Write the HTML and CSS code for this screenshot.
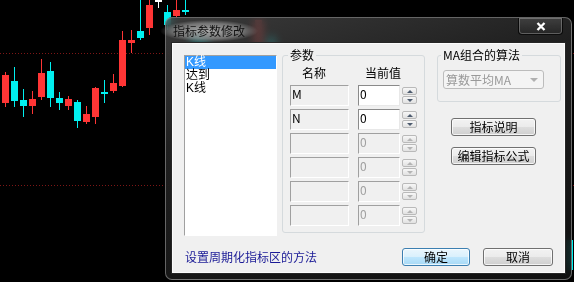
FILE: index.html
```html
<!DOCTYPE html>
<html lang="zh-CN">
<head>
  <meta charset="UTF-8">
  <title>指标参数修改</title>
  <link rel="stylesheet" href="styles.css">
</head>
<body>
  <!-- K线图背景 -->
  <svg class="chart" width="574" height="282" viewBox="0 0 574 282">
    <line class="grid" x1="0" y1="53.5" x2="574" y2="53.5"/>
    <line class="grid" x1="0" y1="185.5" x2="574" y2="185.5"/>
    <g class="up">
      <line x1="5.5" y1="72" x2="5.5" y2="107"/><rect x="2" y="75" width="7" height="28"/>
      <line x1="32.5" y1="91" x2="32.5" y2="114"/><rect x="29" y="99" width="7" height="7"/>
      <line x1="41.5" y1="59" x2="41.5" y2="100"/><rect x="38" y="73" width="7" height="24"/>
      <line x1="68.5" y1="96" x2="68.5" y2="110"/><rect x="65" y="99" width="7" height="7"/>
      <line x1="86.5" y1="106" x2="86.5" y2="124"/><rect x="83" y="114" width="7" height="8"/>
      <line x1="95.5" y1="87" x2="95.5" y2="124"/><rect x="92" y="88" width="7" height="29"/>
      <line x1="113.5" y1="74" x2="113.5" y2="93"/><rect x="110" y="83" width="7" height="8"/>
      <line x1="122.5" y1="31" x2="122.5" y2="87"/><rect x="119" y="40" width="7" height="46"/>
      <line x1="131.5" y1="30" x2="131.5" y2="53"/><rect x="128" y="40" width="7" height="3"/>
      <line x1="149.5" y1="0" x2="149.5" y2="35"/><rect x="146" y="5" width="7" height="23"/>
      <line x1="176.5" y1="0" x2="176.5" y2="18"/><rect x="173" y="10" width="7" height="6"/>
      <rect x="255" y="20" width="7" height="40"/>
    </g>
    <g class="down">
      <line x1="14.5" y1="67" x2="14.5" y2="107"/><rect x="11" y="81" width="7" height="20"/>
      <line x1="23.5" y1="89" x2="23.5" y2="117"/><rect x="20" y="100" width="7" height="6"/>
      <line x1="50.5" y1="62" x2="50.5" y2="107"/><rect x="47" y="71" width="7" height="27"/>
      <line x1="59.5" y1="92" x2="59.5" y2="110"/><rect x="56" y="98" width="7" height="5"/>
      <line x1="77.5" y1="100" x2="77.5" y2="128"/><rect x="74" y="102" width="7" height="19"/>
      <line x1="104.5" y1="80" x2="104.5" y2="103"/><rect x="101" y="92" width="7" height="2"/>
      <line x1="140.5" y1="0" x2="140.5" y2="40"/><rect x="137" y="31" width="7" height="7"/>
      <line x1="167.5" y1="5" x2="167.5" y2="30"/><rect x="164" y="12" width="7" height="13"/>
      <line x1="185.5" y1="0" x2="185.5" y2="15"/><rect x="182" y="10" width="7" height="2"/>
      <rect x="192" y="34" width="7" height="21"/>
      <rect x="201" y="38" width="7" height="14"/>
      <rect x="268" y="37" width="7" height="23"/>
      <rect x="566" y="240" width="7" height="30"/>
    </g>
    <g class="flat">
      <line x1="158.5" y1="0" x2="158.5" y2="8"/><rect x="155" y="0" width="7" height="2"/>
    </g>
  </svg>

  <div class="dialog">
    <div class="titlebar">
      <span class="title">指标参数修改</span>
      <span class="close">
        <svg width="10" height="9" viewBox="0 0 10 9"><path d="M1.5 1 L8.5 8 M8.5 1 L1.5 8"/></svg>
      </span>
    </div>

    <div class="client">
      <div class="main">
        <ul class="list">
          <li class="selected">K线</li>
          <li>达到</li>
          <li>K线</li>
        </ul>

        <fieldset class="params">
          <legend>参数</legend>
          <div class="head">
            <span class="head-name">名称</span>
            <span class="head-value">当前值</span>
          </div>
          <div class="rows">
            <div class="row">
              <div class="field name">M</div>
              <div class="field value">0</div>
              <div class="spin"><span><i class="arrow-up"></i></span><span><i class="arrow-down"></i></span></div>
            </div>
            <div class="row">
              <div class="field name">N</div>
              <div class="field value">0</div>
              <div class="spin"><span><i class="arrow-up"></i></span><span><i class="arrow-down"></i></span></div>
            </div>
            <div class="row off">
              <div class="field name"></div>
              <div class="field value">0</div>
              <div class="spin"><span><i class="arrow-up"></i></span><span><i class="arrow-down"></i></span></div>
            </div>
            <div class="row off">
              <div class="field name"></div>
              <div class="field value">0</div>
              <div class="spin"><span><i class="arrow-up"></i></span><span><i class="arrow-down"></i></span></div>
            </div>
            <div class="row off">
              <div class="field name"></div>
              <div class="field value">0</div>
              <div class="spin"><span><i class="arrow-up"></i></span><span><i class="arrow-down"></i></span></div>
            </div>
            <div class="row off">
              <div class="field name"></div>
              <div class="field value">0</div>
              <div class="spin"><span><i class="arrow-up"></i></span><span><i class="arrow-down"></i></span></div>
            </div>
          </div>
        </fieldset>

        <div class="side">
          <fieldset class="algo">
            <legend>MA组合的算法</legend>
            <div class="combo">算数平均MA<i class="combo-arrow"></i></div>
          </fieldset>
          <button class="btn side-btn">指标说明</button>
          <button class="btn side-btn second">编辑指标公式</button>
        </div>
      </div>

      <div class="footer">
        <span class="link">设置周期化指标区的方法</span>
        <button class="btn default ok">确定</button>
        <button class="btn cancel">取消</button>
      </div>
    </div>
  </div>
</body>
</html>
```

FILE: styles.css
```css
body {
  margin: 0;
  width: 574px;
  height: 282px;
  overflow: hidden;
  position: relative;
  background-color: #000;
  font-family: "Noto Sans CJK SC", "Liberation Sans", sans-serif;
  font-size: 12px;
  color: #000;
}

/* chart */
.chart {
  position: absolute;
  left: 0;
  top: 0;
}
.chart .grid {
  stroke: #7d1616;
  stroke-width: 1;
  stroke-dasharray: 1 2;
}
.up rect { fill: #ff3535; }
.up line { stroke: #ff3535; stroke-width: 1; }
.down rect { fill: #00f0f0; }
.down line { stroke: #00f0f0; stroke-width: 1; }
.flat rect { fill: #ffffff; }
.flat line { stroke: #ffffff; stroke-width: 1; }

/* window */
.dialog {
  position: absolute;
  left: 165px;
  top: 17px;
  width: 407px;
  height: 263px;
  box-sizing: border-box;
  padding: 0 6px 6px 6px;
  border: 1px solid rgba(170, 170, 170, 0.55);
  border-radius: 7px;
  background: linear-gradient(165deg, rgba(80, 80, 80, 0.72) 0%, rgba(38, 38, 38, 0.82) 35%, rgba(18, 18, 18, 0.9) 100%);
  backdrop-filter: blur(5px);
  display: flex;
  flex-direction: column;
}

.titlebar {
  height: 25px;
  display: flex;
  align-items: center;
}

.title {
  margin-left: -12px;
  padding: 5px 13px;
  line-height: 12px;
  color: #111;
  background: radial-gradient(closest-side, rgba(200, 200, 200, 0.8), rgba(190, 190, 190, 0.45) 70%, rgba(190, 190, 190, 0));
}

.close {
  align-self: flex-start;
  margin-left: auto;
  margin-right: 2px;
  width: 45px;
  height: 17px;
  box-sizing: border-box;
  border: 1px solid rgba(0, 0, 0, 0.8);
  border-top: none;
  border-radius: 0 0 4px 4px;
  box-shadow: inset 0 0 0 1px rgba(200, 200, 200, 0.35);
  background: linear-gradient(rgba(90, 90, 90, 0.5), rgba(40, 40, 40, 0.6));
  display: flex;
  align-items: center;
  justify-content: center;
}
.close path {
  stroke: #fff;
  stroke-width: 2.3;
  fill: none;
}

.client {
  flex: 1;
  background-color: #f0f0f0;
  border: 1px solid #fbfbfb;
  box-shadow: 0 0 0 1px #262626;
  display: flex;
  flex-direction: column;
}

.main {
  height: 192px;
  box-sizing: border-box;
  padding: 5px 0 0 11px;
  display: flex;
  align-items: flex-start;
}

/* list */
.list {
  margin: 6px 0 0 0;
  padding: 0;
  list-style: none;
  width: 93px;
  height: 181px;
  box-sizing: border-box;
  border: 1px solid;
  border-color: #a0a0a0 #ffffff #ffffff #a0a0a0;
  background-color: #fff;
  font-family: "Liberation Sans", "Noto Sans CJK SC", sans-serif;
}
.list li {
  height: 13px;
  line-height: 13px;
  padding-left: 1px;
}
.list li.selected {
  background-color: #3399ff;
  color: #fff;
}

/* group boxes */
fieldset {
  margin: 0;
  padding: 0;
  min-width: 0;
  box-sizing: border-box;
  border: 1px solid #d5dadd;
  border-radius: 3px;
}
legend {
  padding: 0 2px;
  line-height: 12px;
}

.params {
  margin-left: 5px;
  width: 143px;
  height: 184px;
}
.params legend {
  margin-left: 5px;
}

.head {
  display: flex;
  margin-top: 6px;
  padding-left: 7px;
  line-height: 12px;
}
.head-name {
  width: 59px;
  box-sizing: border-box;
  padding-left: 12px;
}
.head-value {
  margin-left: 9px;
  padding-left: 7px;
}

.rows {
  margin-top: 6px;
  padding-left: 7px;
  display: flex;
  flex-direction: column;
  gap: 3px;
}
.row {
  display: flex;
  align-items: flex-start;
}

.field {
  height: 21px;
  box-sizing: border-box;
  padding: 1px 0 0 1px;
  line-height: 13px;
  border: 1px solid;
  border-color: #a0a0a0 #ffffff #ffffff #a0a0a0;
  background-color: #f0f0f0;
}
.field.name {
  width: 59px;
}
.field.value {
  width: 42px;
  margin-left: 9px;
  border-color: #8a8a8a #e8e8e8 #e8e8e8 #8a8a8a;
  background-color: #fff;
}
.row.off .field.value {
  color: #a0a0a0;
  background-color: #f0f0f0;
  border-color: #a0a0a0 #ffffff #ffffff #a0a0a0;
}

.spin {
  margin: 2px 0 0 2px;
  width: 15px;
  display: flex;
  flex-direction: column;
  gap: 1px;
}
.spin span {
  height: 8px;
  box-sizing: border-box;
  border: 1px solid #b9b9b9;
  border-radius: 2px;
  background: linear-gradient(#f7f7f7, #e1e1e1);
  display: flex;
  align-items: center;
  justify-content: center;
}
.arrow-up,
.arrow-down {
  width: 0;
  height: 0;
  border-left: 3px solid transparent;
  border-right: 3px solid transparent;
}
.arrow-up {
  border-bottom: 3px solid #4d5b6e;
}
.arrow-down {
  border-top: 3px solid #4d5b6e;
}
.row.off .arrow-up {
  border-bottom-color: #b4b4b4;
}
.row.off .arrow-down {
  border-top-color: #b4b4b4;
}

/* right column */
.side {
  margin-left: 12px;
  display: flex;
  flex-direction: column;
  align-items: flex-start;
}
.algo {
  width: 124px;
  height: 53px;
}
.algo legend {
  margin-left: 3px;
}
.combo {
  margin: 9px 0 0 5px;
  width: 101px;
  height: 19px;
  box-sizing: border-box;
  padding-left: 2px;
  line-height: 17px;
  border: 1px solid #bcbcbc;
  border-radius: 3px;
  background-color: #f4f4f4;
  color: #999;
  display: flex;
  align-items: center;
}
.combo-arrow {
  margin-left: auto;
  margin-right: 5px;
  width: 0;
  height: 0;
  border-left: 4px solid transparent;
  border-right: 4px solid transparent;
  border-top: 4px solid #b0b0b0;
}

.btn {
  height: 18px;
  box-sizing: border-box;
  padding: 0;
  font-family: inherit;
  font-size: 12px;
  line-height: 16px;
  color: #000;
  border: 1px solid #707070;
  border-radius: 3px;
  background: linear-gradient(#f2f2f2 0%, #ebebeb 50%, #dddddd 51%, #cfcfcf 100%);
  box-shadow: inset 0 0 0 1px rgba(255, 255, 255, 0.75);
}
.btn.default {
  border-color: #3c7fb1;
  background: linear-gradient(#eaf6fd 0%, #d9f0fc 50%, #bee6fd 51%, #a7d9f5 100%);
}

.side-btn {
  margin: 16px 0 0 14px;
  width: 85px;
}
.side-btn.second {
  margin-top: 11px;
}

/* footer */
.footer {
  padding: 12px 11px 0 12px;
  display: flex;
  align-items: center;
}
.link {
  color: #1a1a96;
  line-height: 12px;
}
.ok {
  margin-left: auto;
  width: 68px;
}
.cancel {
  margin-left: 13px;
  width: 70px;
}
```
